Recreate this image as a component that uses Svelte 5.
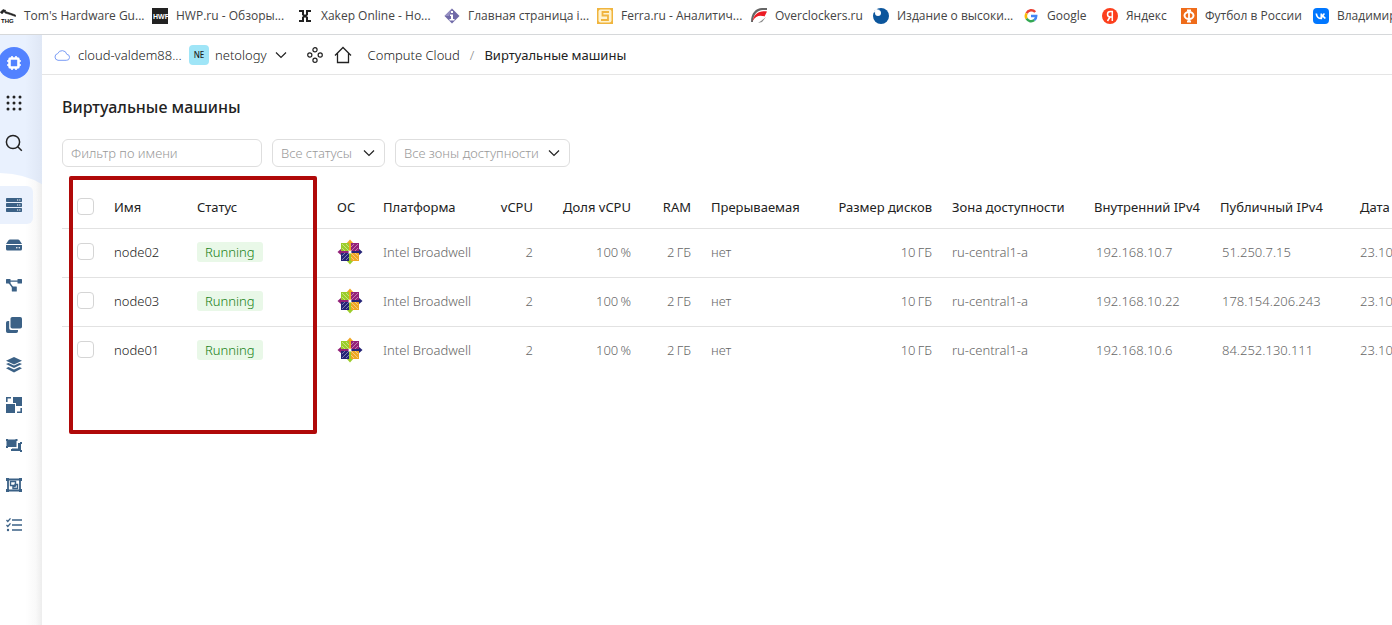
<script>
  const bookmarks = [
    { icon: 'thg', label: "Tom's Hardware Gu..." },
    { icon: 'hwp', label: 'HWP.ru - Обзоры...' },
    { icon: 'xakep', label: 'Xakep Online - Но...' },
    { icon: 'ixbt', label: 'Главная страница i...' },
    { icon: 'ferra', label: 'Ferra.ru - Аналитич...' },
    { icon: 'over', label: 'Overclockers.ru' },
    { icon: 'news', label: 'Издание о высоки...' },
    { icon: 'google', label: 'Google' },
    { icon: 'yandex', label: 'Яндекс' },
    { icon: 'football', label: 'Футбол в России' },
    { icon: 'vk', label: 'Владимир' }
  ];

  const sections = [
    { icon: 'servers', label: 'Виртуальные машины', active: true },
    { icon: 'disk', label: 'Диски' },
    { icon: 'nodes', label: 'Файловые хранилища' },
    { icon: 'copies', label: 'Снимки дисков' },
    { icon: 'layers', label: 'Образы' },
    { icon: 'placement', label: 'Группы размещения' },
    { icon: 'groups', label: 'Группы виртуальных машин' },
    { icon: 'frame', label: 'Пулы выделенных хостов' },
    { icon: 'tasks', label: 'Операции' }
  ];

  const machines = [
    { name: 'node02', internal: '192.168.10.7', external: '51.250.7.15' },
    { name: 'node03', internal: '192.168.10.22', external: '178.154.206.243' },
    { name: 'node01', internal: '192.168.10.6', external: '84.252.130.111' }
  ];
</script>

{#snippet favicon(name)}
  <svg class="favicon" width="16" height="16" viewBox="0 0 16 16" aria-hidden="true">
    {#if name === 'thg'}
      <path d="M0 4.500 3 1.500l3 1L3.500 4 2 6M4 3l6 2 5.500 2v1.500L10 6.500 5 5z" fill="#222" stroke="#222" stroke-width=".6" />
      <text x="1" y="15" font-size="6" font-weight="700" fill="#111">THG</text>
    {:else if name === 'hwp'}
      <rect width="16" height="16" fill="#222" />
      <text class="narrow" x="1" y="11" font-size="7" font-weight="700" fill="#fff">HWP</text>
    {:else if name === 'xakep'}
      <path d="M2 3h4v3.500L8 8l2-1.500V3h4M2 13h4V9.500L8 8l2 1.500V13h4" fill="none" stroke="#222" stroke-width="2" />
    {:else if name === 'ixbt'}
      <path d="M8 .5 15.500 8 8 15.500.5 8z" fill="#706aa8" />
      <path d="M.5 8H5l3-7.500z" fill="#9690c2" />
      <path d="M7 3h2v2H7zM6 6.500h3V11h1.500v1.500h-5V11H7V8H6z" fill="#fff" />
    {:else if name === 'ferra'}
      <rect width="16" height="16" fill="#f0b53e" />
      <rect x="1.500" y="1.500" width="13" height="13" rx="2" fill="#fff3d0" />
      <path d="M12 4H5.500v3.500H11V12H4" fill="none" stroke="#f0b53e" stroke-width="1.800" />
    {:else if name === 'over'}
      <path d="M0 14C0 5 5 0 11 0h5v2h-4C6 2 2 7 2 14z" fill="#666" />
      <path d="M1.500 13C3 6 8 2 16 3.500L13.500 8.500C9 6.500 4.500 8 1.500 13z" fill="#ec1b24" />
      <path d="m7 15 3-2 5-4-4 5z" fill="#888" />
    {:else if name === 'news'}
      <circle cx="8" cy="8" r="8" fill="#0b559c" />
      <circle cx="5" cy="5" r="3" fill="#fff" />
      <path d="M0 5 3 1l4 1z" fill="#fff" />
    {:else if name === 'google'}
      <g fill="none" stroke-width="2.500">
        <path d="M12.200 4A5.200 5.200 0 0 0 3.600 5.300" stroke="#ea4335" />
        <path d="M3.600 5.300a5.200 5.200 0 0 0 0 5.400" stroke="#fbbc05" />
        <path d="M3.600 10.700a5.200 5.200 0 0 0 7.700 1.400" stroke="#34a853" />
        <path d="M11.300 12.100A5.200 5.200 0 0 0 13.200 8H8" stroke="#4285f4" />
      </g>
    {:else if name === 'yandex'}
      <circle cx="8" cy="8" r="8" fill="#fc3f1d" />
      <path d="M10.300 13V3.500H8.500C6.700 3.500 5.500 4.500 5.500 6.200S6.700 9 8.500 9h1.800M8 9l-2.500 4" fill="none" stroke="#fff" stroke-width="1.500" />
    {:else if name === 'football'}
      <rect width="16" height="16" fill="#ef6c1a" />
      <ellipse cx="8" cy="7.500" rx="4.500" ry="3.500" fill="none" stroke="#fff" stroke-width="2" />
      <path d="M8 2v12M6 2.500h4M6 13.500h4" fill="none" stroke="#fff" stroke-width="1.800" />
    {:else}
      <rect width="16" height="16" rx="4" fill="#07f" />
      <path d="M3.300 5.500c.3 3 2 5 5 5v-5M8.300 8c1.500-.2 2.500-1 3-2.500M8.300 8c2 .2 3 1 4 2.500" fill="none" stroke="#fff" stroke-width="1.700" />
    {/if}
  </svg>
{/snippet}

{#snippet sectionIcon(name)}
  <svg width="16" height="16" viewBox="0 0 16 16" fill="#3b6186" aria-hidden="true">
    {#if name === 'servers'}
      <rect y="1" width="16" height="4" rx=".7" /><rect y="6" width="16" height="4" rx=".7" /><rect y="11" width="16" height="4" rx=".7" />
      <path d="M11 2.500h1.200v1H11zm2.200 0h1.200v1h-1.200zM11 7.500h1.200v1H11zm2.200 0h1.200v1h-1.200zM11 12.500h1.200v1H11zm2.200 0h1.200v1h-1.200z" fill="#fff" />
    {:else if name === 'disk'}
      <path d="M4 2.500h8q1 0 1.500.8L16 7H0l2.500-3.700Q3 2.500 4 2.500zM0 8h16v4q0 1.500-1.500 1.500h-13Q0 13.500 0 12z" />
      <circle cx="10.800" cy="10.800" r=".8" fill="#fff" /><circle cx="13.300" cy="10.800" r=".8" fill="#fff" />
    {:else if name === 'nodes'}
      <rect y="2" width="4.500" height="4.500" rx=".5" /><rect x="11.500" y="2" width="4.500" height="4.500" rx=".5" /><rect x="5.800" y="9.500" width="5" height="5" rx=".5" />
      <path d="M4 4.200h8M3 5.500l4.500 6" stroke="#3b6186" stroke-width="1.300" />
    {:else if name === 'copies'}
      <rect x="4.500" width="11.500" height="11.500" rx="1.800" />
      <path d="M3.200 4H1.800Q0 4 0 5.800v8.400Q0 16 1.800 16h8.400Q12 16 12 14.200V13H5q-1.800 0-1.800-1.800z" />
    {:else if name === 'layers'}
      <path d="m8 0 8 3.800-8 3.800-8-3.800z" />
      <path d="m0 7 2.500-1.100L8 8.500l5.500-2.600L16 7l-8 4zM0 11.200l2.500-1.300L8 12.500l5.500-2.600 2.500 1.300-8 4.200z" />
    {:else if name === 'placement'}
      <path d="M7 0h9v9h-6V6H7zM0 7h9v9H0z" />
      <path d="M.8 5V.8H5M15.200 11v4.200H11" fill="none" stroke="#3b6186" stroke-width="1.600" />
    {:else if name === 'groups'}
      <path d="M.5 2.500h10v7.500H.5z" /><path d="M12 6h3v8H6v-2.500h6z" />
      <path d="M0 2h2v2H0zm9.500 0h2v2h-2zM0 9h2v2H0zm14-4h2v2h-2zm0 8h2v2h-2zM5 12h2v2H5z" />
    {:else if name === 'frame'}
      <path d="M2 2.500h12v11H2z" fill="none" stroke="#3b6186" stroke-width="1.800" />
      <path d="M0 1h3v3H0zm13 0h3v3h-3zM0 12h3v3H0zm13 0h3v3h-3z" />
      <path d="M4.500 4.500h5v4h-5zM9 7.500h2.500v4H7V9.500h2z" fill="none" stroke="#3b6186" stroke-width="1.400" />
    {:else}
      <path d="M6 3h10M6 8h10M6 13h10" stroke="#3b6186" stroke-width="1.700" />
      <path d="m.5 3 1.300 1.500L4.500 1.300M.5 8l1.300 1.500L4.500 6.300" fill="none" stroke="#3b6186" stroke-width="1.300" />
      <circle cx="2" cy="13" r="1.200" />
    {/if}
  </svg>
{/snippet}

{#snippet chevron()}
  <svg class="chevron" width="12" height="8" viewBox="0 0 12 8" fill="none" stroke="#222" stroke-width="1.200" aria-hidden="true">
    <path d="m1 1.500 5 5 5-5" />
  </svg>
{/snippet}

{#snippet centos()}
  <svg class="os" width="26" height="26" viewBox="-13 -13 26 26" role="img" aria-label="CentOS">
    <path d="M0-12.500 4-8h-8z" fill="#efa724" /><path d="M12.500 0 8 4v-8z" fill="#262577" />
    <path d="M0 12.500-4 8h8z" fill="#9ccd2a" /><path d="M-12.500 0-8-4v8z" fill="#932279" />
    <path d="M-9-9h8v8h-8z" fill="#9ccd2a" /><path d="M1-9h8v8H1z" fill="#932279" />
    <path d="M1 1h8v8H1z" fill="#efa724" /><path d="M-9 1h8v8h-8z" fill="#262577" />
    <path d="M-1-10H1v9H-1z" fill="#efa724" /><path d="M-1 1H1v9H-1z" fill="#9ccd2a" />
    <path d="M-10-1h9V1h-9z" fill="#932279" /><path d="M1-1h9V1H1z" fill="#262577" />
    <path d="m-8-8 16 16M8-8-8 8M-4-8l3 3M-8-4l3 3M4-8 1-5M8-4 5-1M4 8 1 5M8 4 5 1M-4 8l3-3M-8 4l3-3" stroke="#fff" stroke-width=".7" opacity=".6" />
    <circle r="1.600" fill="#fff" />
  </svg>
{/snippet}

<div class="page">
  <nav class="bookmarks" aria-label="Закладки">
    {#each bookmarks as item}
      <a href="#bookmark">{@render favicon(item.icon)}<span>{item.label}</span></a>
    {/each}
  </nav>

  <div class="shell">
    <aside class="rail">
      <div class="rail-top">
        <button class="service" aria-label="Compute Cloud">
          <svg width="32" height="32" viewBox="0 0 32 32" fill="none" stroke="#fff" aria-hidden="true">
            <circle cx="16" cy="16" r="16" fill="#5282ff" stroke="none" />
            <rect x="11.500" y="11.500" width="9" height="9" rx="1" stroke-width="2.600" />
            <path d="M14 9v2M18 9v2M14 21v2M18 21v2M9 14h2M9 18h2M21 14h2M21 18h2" stroke-width="1.600" />
          </svg>
        </button>
        <button aria-label="Все сервисы">
          <svg width="16" height="16" viewBox="0 0 16 16" fill="#222" aria-hidden="true">
            {#each [2, 8, 14] as y}{#each [2, 8, 14] as x}<circle cx={x} cy={y} r="1.500" />{/each}{/each}
          </svg>
        </button>
        <button aria-label="Поиск">
          <svg width="18" height="18" viewBox="0 0 18 18" fill="none" stroke="#222" stroke-width="1.500" aria-hidden="true">
            <circle cx="8" cy="8" r="6.600" /><path d="m12.800 12.800 4 4" />
          </svg>
        </button>
      </div>
      <svg class="curve" viewBox="0 0 42 16" preserveAspectRatio="none" aria-hidden="true">
        <defs>
          <linearGradient id="rail-tint"><stop offset=".6" stop-color="#e9f1fe" /><stop offset="1" stop-color="#dfe7f5" /></linearGradient>
        </defs>
        <path d="M0 0h42v14Q26 2 0 1z" fill="url(#rail-tint)" />
      </svg>
      <nav class="rail-nav" aria-label="Разделы">
        {#each sections as item}
          <a href="#section" class:active={item.active} aria-label={item.label}>{@render sectionIcon(item.icon)}</a>
        {/each}
      </nav>
    </aside>

    <div class="main">
      <header class="crumbs">
        <a href="#cloud" class="cloud">
          <svg width="16" height="12" viewBox="0 0 16 12" fill="none" stroke="#7a9cf5" aria-hidden="true">
            <path d="M4 11.300h8.200a3 3 0 0 0 .6-6A4.800 4.800 0 0 0 3.700 4.600 3.400 3.400 0 0 0 4 11.300z" />
          </svg>
          <span>cloud-valdem88...</span>
        </a>
        <button class="folder"><span class="badge">NE</span><span>netology</span>{@render chevron()}</button>
        <a href="#dashboard" class="tool" aria-label="Дашборд">
          <svg width="16" height="16" viewBox="0 0 16 16" fill="none" stroke="#222" stroke-width="1.200" aria-hidden="true">
            <circle cx="8" cy="2.800" r="2.100" /><circle cx="2.800" cy="8" r="2.100" /><circle cx="13.200" cy="8" r="2.100" /><circle cx="8" cy="13.200" r="2.100" />
          </svg>
        </a>
        <a href="#home" class="home" aria-label="Главная">
          <svg width="18" height="18" viewBox="0 0 18 18" fill="none" stroke="#222" stroke-width="1.300" aria-hidden="true">
            <path d="M1 9.500 9 1.500l8 8M3.500 7.500v9h11v-9" />
          </svg>
        </a>
        <a href="#compute">Compute Cloud</a>
        <span class="slash">/</span>
        <span class="current">Виртуальные машины</span>
      </header>

      <main>
        <h1>Виртуальные машины</h1>
        <div class="filters">
          <input class="search" type="text" placeholder="Фильтр по имени" aria-label="Фильтр по имени" />
          <label class="pick status">
            <select aria-label="Статус"><option>Все статусы</option></select>
            {@render chevron()}
          </label>
          <label class="pick zone">
            <select aria-label="Зона доступности"><option>Все зоны доступности</option></select>
            {@render chevron()}
          </label>
        </div>

        <div class="table-area">
          <table>
            <colgroup>
              <col class="w-check" /><col class="w-name" /><col class="w-status" /><col class="w-os" /><col class="w-platform" />
              <col class="w-cpu" /><col class="w-share" /><col class="w-ram" /><col class="w-preempt" /><col class="w-disk" />
              <col class="w-zone" /><col class="w-int" /><col class="w-ext" /><col class="w-date" />
            </colgroup>
            <thead>
              <tr>
                <th class="check"><input type="checkbox" aria-label="Выбрать все" /></th>
                <th>Имя</th>
                <th>Статус</th>
                <th>ОС</th>
                <th>Платформа</th>
                <th class="num">vCPU</th>
                <th class="num">Доля vCPU</th>
                <th class="num">RAM</th>
                <th>Прерываемая</th>
                <th class="num">Размер дисков</th>
                <th>Зона доступности</th>
                <th>Внутренний IPv4</th>
                <th>Публичный IPv4</th>
                <th>Дата</th>
              </tr>
            </thead>
            <tbody>
              {#each machines as vm}
                <tr>
                  <td class="check"><input type="checkbox" aria-label={vm.name} /></td>
                  <td class="name">{vm.name}</td>
                  <td><span class="running">Running</span></td>
                  <td>{@render centos()}</td>
                  <td>Intel Broadwell</td>
                  <td class="num">2</td>
                  <td class="num">100&#8201;%</td>
                  <td class="num">2&#8201;ГБ</td>
                  <td>нет</td>
                  <td class="num">10&#8201;ГБ</td>
                  <td>ru-central1-a</td>
                  <td class="ip">{vm.internal}</td>
                  <td class="ip">{vm.external}</td>
                  <td>23.10</td>
                </tr>
              {/each}
            </tbody>
          </table>
          <div class="highlight"></div>
        </div>
      </main>
    </div>
  </div>
</div>

<style>
  :global(body) {
    background: #fff;
    overflow: hidden;
  }

  .page {
    min-height: 100vh;
    display: flex;
    flex-direction: column;
    overflow: hidden;
    font: 13px/20px 'Noto Sans', 'Open Sans', sans-serif;
    color: #222;
  }

  a {
    color: inherit;
    text-decoration: none;
  }

  button {
    display: flex;
    align-items: center;
    justify-content: center;
    padding: 0;
    border: 0;
    background: none;
    font: inherit;
    color: inherit;
  }

  svg {
    display: block;
    flex: none;
  }

  .bookmarks {
    display: grid;
    grid-template-columns: 152px 145px 147px 153px 154px 122px 150px 79px 79px 132px 1fr;
    height: 34px;
    border-bottom: 1px solid #d6d8da;
    font: 12px/16px 'Open Sans', 'Noto Sans', sans-serif;
    color: #444;
    white-space: nowrap;
  }

  .bookmarks a {
    display: flex;
    align-items: center;
    gap: 8px;
    min-width: 0;
    padding-bottom: 2px;
  }

  .favicon text {
    font-family: 'Liberation Sans', sans-serif;
  }

  .favicon .narrow {
    font-family: 'Liberation Sans Narrow', 'Liberation Sans', sans-serif;
  }

  .shell {
    flex: 1;
    display: flex;
  }

  .rail {
    flex: none;
    width: 42px;
    background: linear-gradient(90deg, #fff 60%, #f9f9f9 85%, #ededed);
  }

  .rail-top {
    display: flex;
    flex-direction: column;
    padding: 8px 0 9px;
    background: linear-gradient(90deg, #e9f1fe 60%, #dfe7f5);
  }

  .rail-top button {
    width: 28px;
    height: 40px;
  }

  .curve {
    width: 42px;
    height: 14px;
  }

  .rail-nav {
    display: flex;
    flex-direction: column;
    gap: 2px;
  }

  .rail-nav a {
    display: flex;
    align-items: center;
    width: 27px;
    height: 38px;
    padding-left: 6px;
    border-radius: 0 6px 6px 0;
  }

  .rail-nav a.active {
    background: #eaf1fd;
  }

  .main {
    flex: 1;
    min-width: 0;
  }

  .crumbs {
    display: flex;
    align-items: center;
    height: 39px;
    padding-left: 12px;
    border-bottom: 1px solid #e5e5e5;
    font-weight: 300;
    white-space: nowrap;
  }

  .cloud {
    display: flex;
    align-items: center;
    gap: 8px;
    width: 135px;
  }

  .folder {
    gap: 6px;
    margin-right: 20px;
  }

  .folder .chevron {
    margin-left: 2px;
  }

  .badge {
    width: 20px;
    border-radius: 4px;
    background: #9fe5f7;
    font-size: 8px;
    font-weight: 500;
    text-align: center;
  }

  .tool {
    margin-right: 11px;
  }

  .home {
    margin-right: 16px;
  }

  .slash {
    margin: 0 10px;
    color: #888;
  }

  .current {
    font-weight: 400;
  }

  main {
    padding: 20px 0 0 20px;
  }

  h1 {
    margin: 0 0 20px;
    font-size: 16px;
    line-height: 24px;
    font-weight: 500;
  }

  .filters {
    display: flex;
    gap: 10px;
  }

  .search,
  .pick select {
    box-sizing: border-box;
    height: 28px;
    margin: 0;
    padding: 0 8px;
    border: 1px solid #dedede;
    border-radius: 6px;
    background: #fff;
    font: inherit;
    font-weight: 300;
    color: #999;
  }

  .search {
    width: 200px;
  }

  .search::placeholder {
    color: #999;
  }

  .pick {
    display: grid;
    align-items: center;
  }

  .pick select,
  .pick .chevron {
    grid-area: 1 / 1;
  }

  .pick select {
    width: 100%;
    appearance: none;
  }

  .pick .chevron {
    justify-self: end;
    margin-right: 10px;
  }

  .status {
    width: 113px;
  }

  .zone {
    width: 175px;
  }

  .table-area {
    position: relative;
    padding-top: 19px;
  }

  table {
    width: 100%;
    min-width: 1438px;
    table-layout: fixed;
    border-collapse: collapse;
  }

  .w-check { width: 42px; }
  .w-name { width: 83px; }
  .w-status { width: 140px; }
  .w-os { width: 46px; }
  .w-platform { width: 112px; }
  .w-cpu { width: 58px; }
  .w-share { width: 98px; }
  .w-ram { width: 60px; }
  .w-preempt { width: 118px; }
  .w-disk { width: 123px; }
  .w-zone { width: 142px; }
  .w-int { width: 126px; }
  .w-ext { width: 140px; }

  th,
  td {
    box-sizing: border-box;
    padding: 0 10px;
    text-align: left;
    font-weight: 400;
    white-space: nowrap;
  }

  th {
    height: 42px;
  }

  td {
    height: 49px;
    padding-bottom: 2px;
    font-weight: 300;
    color: #666;
  }

  td.name {
    color: #222;
  }

  td.ip {
    padding-left: 12px;
  }

  .num {
    text-align: right;
  }

  thead tr,
  tbody tr:not(:last-child) {
    border-bottom: 1px solid #e2e2e2;
  }

  .check {
    padding-left: 15px;
    padding-right: 0;
  }

  .check input {
    display: block;
    box-sizing: border-box;
    width: 17px;
    height: 17px;
    margin: 0;
    border: 1px solid #d5d5d5;
    border-radius: 4px;
    background: #fff;
    appearance: none;
  }

  .running {
    display: inline-block;
    padding: 0 8px;
    border-radius: 3px;
    background: #e9f8e8;
    color: #168016;
  }

  .highlight {
    position: absolute;
    top: 9px;
    left: 7px;
    box-sizing: border-box;
    width: 248px;
    height: 258px;
    border: 4px solid #b00909;
    border-radius: 2px;
    pointer-events: none;
  }
</style>
